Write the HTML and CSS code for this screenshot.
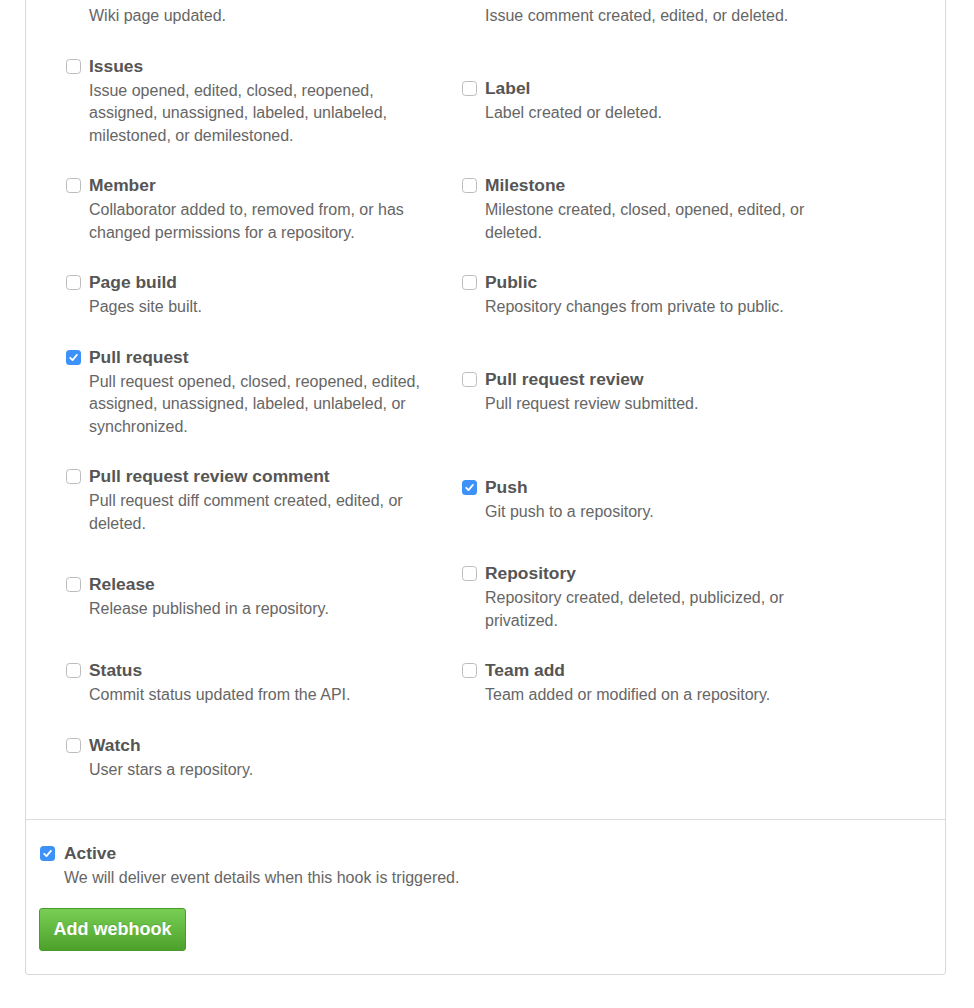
FILE: index.html
```html
<!DOCTYPE html>
<html>
<head>
<meta charset="utf-8">
<title>Webhook events</title>
<link rel="stylesheet" href="styles.css">
</head>
<body>
<div class="page">
  <form class="box">
    <div class="events">
      <div class="event first"><span class="text"><span class="desc">Wiki page updated.</span></span></div>
      <div class="event first"><span class="text"><span class="desc">Issue comment created, edited, or deleted.</span></span></div>

      <label class="event"><span class="cb"></span><span class="text"><span class="title">Issues</span><span class="desc">Issue opened, edited, closed, reopened, assigned, unassigned, labeled, unlabeled, milestoned, or demilestoned.</span></span></label>
      <label class="event"><span class="cb"></span><span class="text"><span class="title">Label</span><span class="desc">Label created or deleted.</span></span></label>

      <label class="event"><span class="cb"></span><span class="text"><span class="title">Member</span><span class="desc">Collaborator added to, removed from, or has changed permissions for a repository.</span></span></label>
      <label class="event"><span class="cb"></span><span class="text"><span class="title">Milestone</span><span class="desc">Milestone created, closed, opened, edited, or deleted.</span></span></label>

      <label class="event"><span class="cb"></span><span class="text"><span class="title">Page build</span><span class="desc">Pages site built.</span></span></label>
      <label class="event"><span class="cb"></span><span class="text"><span class="title">Public</span><span class="desc">Repository changes from private to public.</span></span></label>

      <label class="event"><span class="cb checked"><svg viewBox="0 0 15 15" width="15" height="15"><path d="M4.2 7.8 L6.5 10.1 L10.9 4.9" fill="none" stroke="#fff" stroke-width="1.8" stroke-linecap="round" stroke-linejoin="round"/></svg></span><span class="text"><span class="title">Pull request</span><span class="desc">Pull request opened, closed, reopened, edited, assigned, unassigned, labeled, unlabeled, or synchronized.</span></span></label>
      <label class="event"><span class="cb"></span><span class="text"><span class="title">Pull request review</span><span class="desc">Pull request review submitted.</span></span></label>

      <label class="event"><span class="cb"></span><span class="text"><span class="title">Pull request review comment</span><span class="desc">Pull request diff comment created, edited, or deleted.</span></span></label>
      <label class="event"><span class="cb checked"><svg viewBox="0 0 15 15" width="15" height="15"><path d="M4.2 7.8 L6.5 10.1 L10.9 4.9" fill="none" stroke="#fff" stroke-width="1.8" stroke-linecap="round" stroke-linejoin="round"/></svg></span><span class="text"><span class="title">Push</span><span class="desc">Git push to a repository.</span></span></label>

      <label class="event"><span class="cb"></span><span class="text"><span class="title">Release</span><span class="desc">Release published in a repository.</span></span></label>
      <label class="event"><span class="cb"></span><span class="text"><span class="title">Repository</span><span class="desc">Repository created, deleted, publicized, or privatized.</span></span></label>

      <label class="event"><span class="cb"></span><span class="text"><span class="title">Status</span><span class="desc">Commit status updated from the API.</span></span></label>
      <label class="event"><span class="cb"></span><span class="text"><span class="title">Team add</span><span class="desc">Team added or modified on a repository.</span></span></label>

      <label class="event"><span class="cb"></span><span class="text"><span class="title">Watch</span><span class="desc">User stars a repository.</span></span></label>
    </div>

    <div class="active-section">
      <label class="event active"><span class="cb checked"><svg viewBox="0 0 15 15" width="15" height="15"><path d="M4.2 7.8 L6.5 10.1 L10.9 4.9" fill="none" stroke="#fff" stroke-width="1.8" stroke-linecap="round" stroke-linejoin="round"/></svg></span><span class="text"><span class="title">Active</span><span class="desc">We will deliver event details when this hook is triggered.</span></span></label>
      <button type="button" class="btn">Add webhook</button>
    </div>
  </form>
</div>
</body>
</html>
```

FILE: styles.css
```css
html, body {
  margin: 0;
  padding: 0;
  background: #fff;
}

body {
  font-family: "Liberation Sans", Arial, sans-serif;
  color: #666;
  overflow: hidden;
}

.page {
  padding: 0 28px 0 25px;
}

.box {
  margin-top: -40px;
  border: 1px solid #d8d8d8;
  border-radius: 3px;
}

.events {
  display: grid;
  grid-template-columns: 396px 396px;
  align-items: center;
  row-gap: 27px;
  padding: 44px 0 38px 40px;
}

.event {
  display: flex;
  align-items: flex-start;
  gap: 8px;
}

.event.first {
  padding-left: 23px;
}

.cb {
  flex: none;
  box-sizing: border-box;
  width: 15px;
  height: 15px;
  margin-top: 4px;
  border: 1px solid #bcbcbc;
  border-radius: 3.5px;
  background: #fff;
  display: flex;
  align-items: center;
  justify-content: center;
}

.cb.checked {
  border: none;
  background: #3c92f8;
}

.cb svg {
  display: block;
}

.text {
  display: flex;
  flex-direction: column;
  max-width: 345px;
}

.title {
  font-size: 17.4px;
  font-weight: bold;
  line-height: 22px;
  color: #555;
}

.desc {
  font-size: 16px;
  line-height: 22.5px;
  color: #666;
}

.title + .desc {
  margin-top: 3px;
}

.active-section {
  border-top: 1px solid #dcdcdc;
  padding: 22px 14px 23px 14px;
}

.event.active {
  gap: 9px;
}

.event.active .text {
  max-width: none;
}

.btn {
  display: block;
  margin: 18px 0 0 -1px;
  width: 147px;
  height: 43px;
  padding: 0;
  border: 1px solid #4a9b2c;
  border-radius: 3px;
  background: linear-gradient(#79cf55, #4da12b);
  color: #fff;
  font-family: "Liberation Sans", Arial, sans-serif;
  font-size: 18px;
  font-weight: bold;
  text-shadow: 0 -1px 0 rgba(0,0,0,0.15);
  cursor: pointer;
}
```
